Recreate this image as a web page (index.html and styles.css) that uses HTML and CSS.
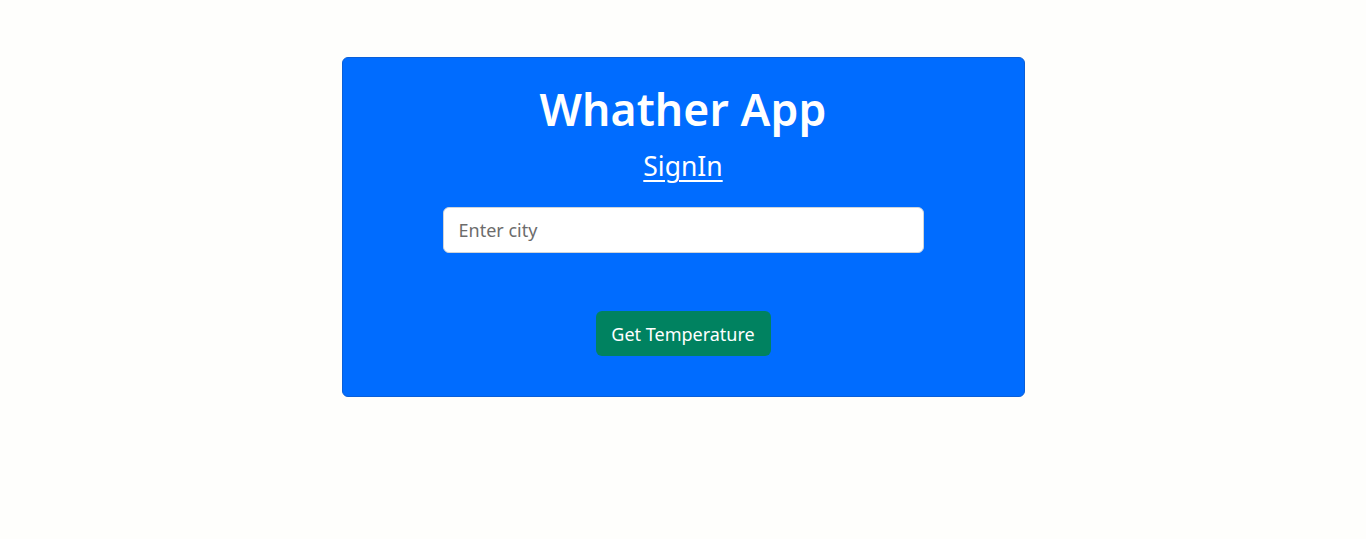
FILE: index.html
```html
<!DOCTYPE html>
<html lang="en">
<head>
<meta charset="utf-8">
<title>Whather App</title>
<link rel="stylesheet" href="styles.css">
</head>
<body>
  <main class="card">
    <h1 class="title">Whather App</h1>
    <a class="signin" href="#">SignIn</a>
    <input class="city" type="text" placeholder="Enter city">
    <button class="btn" type="button">Get Temperature</button>
  </main>
</body>
</html>
```
FILE: styles.css
```css
* { box-sizing: border-box; }
html, body { margin: 0; padding: 0; }
body {
  background: #fefefc;
  font-family: "Noto Sans", "Open Sans", "DejaVu Sans", sans-serif;
  color: #212529;
}
.card {
  width: 683px;
  margin: 57px auto 0;
  background: #006cff;
  border: 1px solid #0a5fd8;
  border-radius: 6px;
  display: flex;
  flex-direction: column;
  align-items: center;
  padding: 24px 0 40px;
}
.title {
  margin: 0;
  font-size: 44.5px;
  font-weight: 600;
  line-height: 54px;
  color: #ffffff;
  letter-spacing: 0.1px;
}
.signin {
  margin-top: 12px;
  font-size: 26.5px;
  line-height: 36px;
  color: #ffffff;
  text-decoration: underline;
  text-underline-offset: 4px;
  text-decoration-thickness: 2px;
}
.city {
  margin-top: 23px;
  width: 481px;
  height: 46px;
  padding: 0 15px;
  border: 1px solid #ced4da;
  border-radius: 6px;
  background: #ffffff;
  font-family: inherit;
  font-size: 18px;
  color: #212529;
}
.city::placeholder { color: #6c6c6c; }
.btn {
  margin-top: 58px;
  width: 175px;
  height: 45px;
  padding: 0 14px;
  border: none;
  border-radius: 6px;
  background: #008260;
  color: #ffffff;
  font-family: inherit;
  font-size: 18px;
  cursor: pointer;
}
```
